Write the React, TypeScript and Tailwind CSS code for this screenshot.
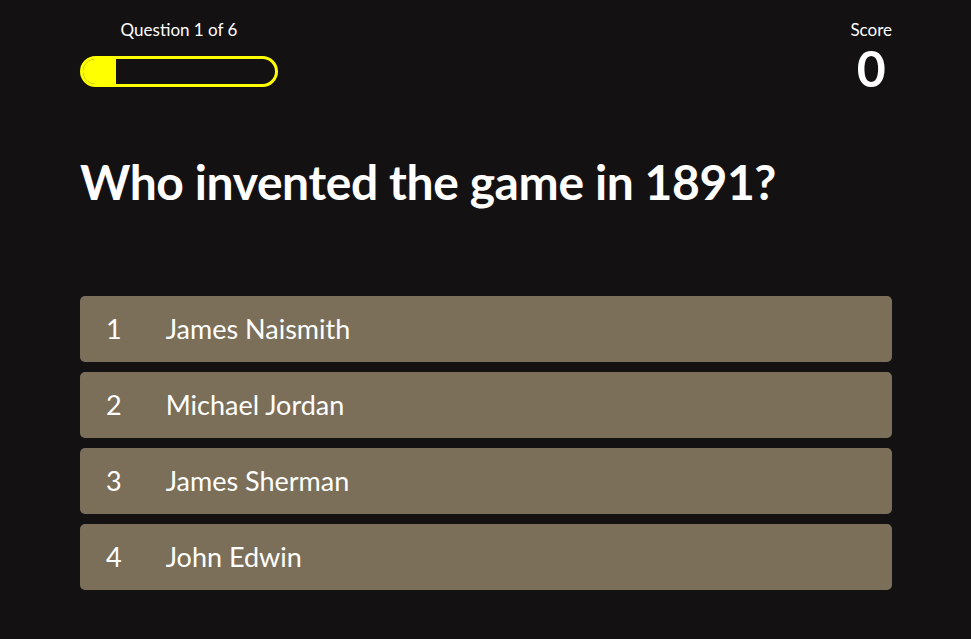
import React from 'react'

const answers = ['James Naismith', 'Michael Jordan', 'James Sherman', 'John Edwin']

export default function App() {
  return (
    <div className="min-h-[639px] w-full bg-[#131112] text-white font-['Lato',sans-serif]">
      <div className="mx-[80px] pt-[19px] w-[812px]">
        <div className="flex justify-between items-start">
          <div className="w-[198px] flex flex-col items-center">
            <div className="text-[17px] leading-[22px]">Question 1 of 6</div>
            <div className="mt-[15px] w-full h-[31px] rounded-full border-[3px] border-[#ffff00] overflow-hidden">
              <div className="h-full w-[33px] bg-[#ffff00]" />
            </div>
          </div>
          <div className="flex flex-col items-center">
            <div className="text-[17px] leading-[22px]">Score</div>
            <div className="text-[50px] font-bold leading-[50px] mt-[2px]">0</div>
          </div>
        </div>

        <h1 className="mt-[56px] text-[48px] font-bold leading-[66px] tracking-[-0.4px]">
          Who invented the game in 1891?
        </h1>

        <div className="mt-[81px] flex flex-col gap-[10px]">
          {answers.map((a, i) => (
            <button
              key={a}
              className="h-[66px] w-full rounded-[5px] bg-[#7b6f59] flex items-center pl-[26px] text-[27px] text-left"
            >
              <span>{i + 1}</span>
              <span className="ml-[44px]">{a}</span>
            </button>
          ))}
        </div>
      </div>
    </div>
  )
}
